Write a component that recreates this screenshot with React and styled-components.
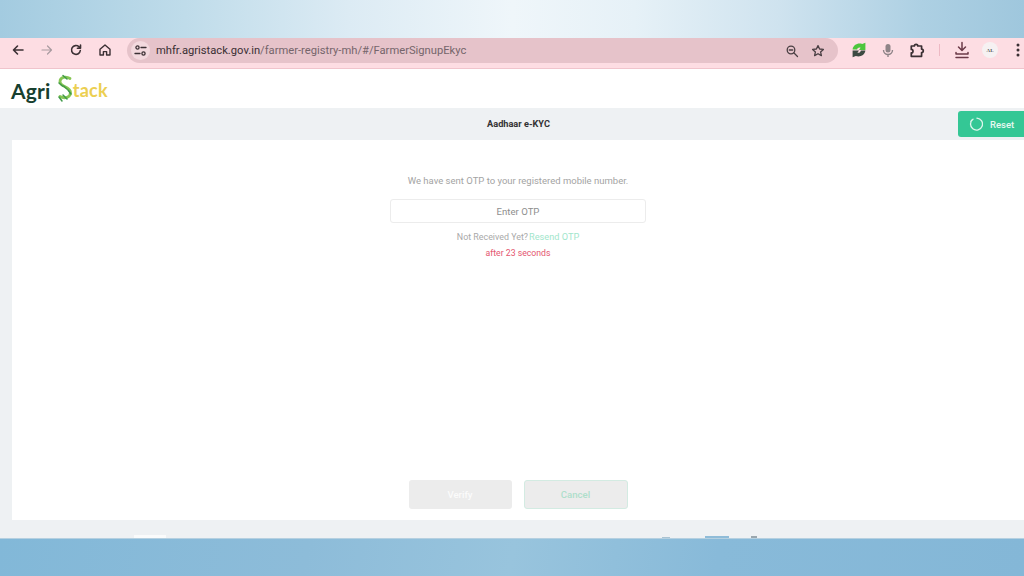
import React from "react";
import styled, { createGlobalStyle } from "styled-components";

const Global = createGlobalStyle`
  html, body { margin: 0; padding: 0; background: #eef1f3; }
  body { width: 1024px; height: 576px; overflow: hidden; font-family: Roboto, "Liberation Sans", sans-serif; }
  * { box-sizing: border-box; }
`;

const Page = styled.div`
  width: 1024px; height: 576px; display: flex; flex-direction: column; overflow: hidden;
`;
const Wallpaper = styled.div`
  height: 38px; flex: none;
  background: linear-gradient(90deg, #a3cbe0 0%, #bfdcea 18%, #dcebf4 34%, #eff6fa 50%, #e6f1f7 62%, #cfe3ef 76%, #add0e3 90%, #9fc7dd 100%);
`;
const Chrome = styled.div`
  height: 31px; flex: none; display: flex; align-items: flex-start;
  background: #fddde3; border-bottom: 1px solid #f0c4cc; padding-left: 11px;
`;
const NavButton = styled.span`
  width: 14px; height: 14px; flex: none; margin: 5px ${p => p.$gap}px 0 0;
  display: flex; color: ${p => p.$color || "#3b3034"};
`;
const Omnibox = styled.div`
  width: 711px; height: 25px; margin-left: 15px; flex: none; border-radius: 13px;
  background: #e6c3ca; display: flex; align-items: center; padding: 0 13px 0 4px; position: relative;
`;
const SiteChip = styled.span`
  width: 19px; height: 19px; border-radius: 50%; background: #f3d9de; display: flex;
  align-items: center; justify-content: center; color: #3b3034; margin-right: 6px; flex: none;
`;
const Url = styled.span`
  font: 400 11.2px Roboto, sans-serif; color: #75656b; white-space: nowrap; flex: 1;
  b { font-weight: 400; color: #3a2f33; }
`;
const OmniIcon = styled.span`
  display: flex; width: 14px; height: 14px; color: #4a3f43; margin-left: ${p => p.$gap || 0}px;
`;
const Tools = styled.div`
  display: flex; align-items: flex-start; flex: 1; position: relative; height: 100%; padding-top: 4px;
`;
const ToolIcon = styled.span`
  width: 16px; height: 16px; display: flex; align-items: center; justify-content: center;
  flex: none; margin-left: ${p => p.$gap}px; color: ${p => p.$color || "#3b3034"};
`;
const Divider = styled.span`
  width: 1px; height: 12px; margin-top: 2px; background: #eeb9c4; margin-left: 14px; flex: none;
`;
const Avatar = styled.span`
  width: 16px; height: 16px; border-radius: 50%; background: #f6f1f2; margin-left: 12px; flex: none;
  font: 700 5px "Liberation Serif", serif; color: #555; display: flex; align-items: center; justify-content: center;
`;
const LogoBar = styled.div`
  height: 39px; flex: none; background: #fff; display: flex; align-items: center; padding-left: 11px;
`;
const LogoAgri = styled.span`
  font: 700 21px/1 Lato, sans-serif; color: #17402f; letter-spacing: 0.2px; margin-top: 3px;
`;
const LogoStack = styled.span`
  font: 700 18px/1 Lato, sans-serif; color: #eccf52; letter-spacing: 0.3px; margin-left: -1px; margin-top: 3px;
`;
const LogoMark = styled.svg`
  width: 18px; height: 29px; margin-left: 5px; flex: none;
`;
const TitleBar = styled.div`
  height: 32px; flex: none; background: #eef1f3; position: relative; padding-left: 13px;
  display: flex; align-items: center; justify-content: center;
`;
const Title = styled.h1`
  margin: 0 0 1px 0; font: 700 9.2px Roboto, "Liberation Sans", sans-serif; color: #333;
`;
const ResetButton = styled.button`
  position: absolute; right: 0; top: 3px; width: 66px; height: 26px; border: 0;
  border-radius: 3px 0 0 3px; background: #34c795; color: #e6f8f1; display: flex; align-items: center;
  padding: 0 0 0 11px; gap: 7px; font: 500 9.5px Roboto, sans-serif;
`;
const Content = styled.div`
  flex: 1; margin-left: 12px; background: #fff; display: flex; flex-direction: column; align-items: center;
  padding-top: 35px;
`;
const Notice = styled.p`
  margin: 0 0 12px; font: 400 9.5px/12px Roboto, sans-serif; color: #a3a3a3;
`;
const OtpInput = styled.div`
  width: 256px; height: 24px; border: 1px solid #ececec; border-radius: 3px; margin-bottom: 8px;
  display: flex; align-items: center; justify-content: center; font: 400 9.6px Roboto, sans-serif; color: #8e8e8e;
`;
const ResendRow = styled.div`
  font: 400 8.9px/12px Roboto, sans-serif; color: #a9a9a9; margin-bottom: 4px; white-space: nowrap;
`;
const ResendLink = styled.span`
  color: #a2e6cc; margin-left: 1px; font-size: 9.2px;
`;
const Timer = styled.div`
  font: 400 8.7px/12px Roboto, sans-serif; color: #e4566f;
`;
const Actions = styled.div`
  margin-top: auto; margin-bottom: 11px; display: flex; gap: 12px;
`;
const VerifyButton = styled.button`
  width: 103px; height: 29px; border: 0; border-radius: 3px; background: #ececec; color: #fbfbfb;
  font: 500 9.6px Roboto, sans-serif; padding: 0;
`;
const CancelButton = styled(VerifyButton)`
  width: 104px; border: 1px solid #d3ebe2; color: #aedfcb;
`;
const Footer = styled.div`
  height: 18px; flex: none; background: #eef1f3; position: relative;
`;
const FooterScrap = styled.span`
  position: absolute; bottom: 0; left: ${p => p.$left}px; width: ${p => p.$width}px; height: ${p => p.$h}px;
  background: ${p => p.$color};
`;
const Desktop = styled.div`
  height: 38px; flex: none; border-top: 1px solid #b5d0e0;
  background: linear-gradient(100deg, #82b8d8 0%, #8dbcd9 30%, #98c4dd 50%, #88bad9 70%, #84b7d7 100%);
`;

const stroke = { fill: "none", stroke: "currentColor", strokeLinecap: "round", strokeLinejoin: "round" };
const Ico = ({ children, w = 1.6, size = 14 }) => (
  <svg width={size} height={size} viewBox="0 0 14 14" {...stroke} strokeWidth={w}>{children}</svg>
);

export default function App() {
  return (
    <Page>
      <Global />
      <Wallpaper />
      <Chrome>
        <NavButton $gap={15}><Ico><path d="M12 7H2.5M6.5 3 2.5 7l4 4" /></Ico></NavButton>
        <NavButton $gap={15} $color="#a99ba0"><Ico w={1.2}><path d="M2 7h9.5M7.5 3l4 4-4 4" /></Ico></NavButton>
        <NavButton $gap={15}><Ico><path d="M11.3 7.5A4.4 4.4 0 1 1 10 3.8L11.5 5.2M11.5 2v3.2H8.4" /></Ico></NavButton>
        <NavButton $gap={0}><Ico w={1.4}><path d="M2 6.3 7 2l5 4.3V12H8.6V8.6H5.4V12H2z" /></Ico></NavButton>
        <Omnibox>
          <SiteChip>
            <svg width="13" height="13" viewBox="0 0 13 13" {...stroke} strokeWidth="1.3">
              <circle cx="3.5" cy="3.5" r="1.6" /><path d="M7 3.5h5M1 9.5h5" /><circle cx="9.5" cy="9.5" r="1.6" />
            </svg>
          </SiteChip>
          <Url><b>mhfr.agristack.gov.in</b>/farmer-registry-mh/#/FarmerSignupEkyc</Url>
          <OmniIcon>
            <Ico w={1.3}><circle cx="6" cy="6" r="3.8" /><path d="M9 9l3.5 3.5M4.3 6h3.4" /></Ico>
          </OmniIcon>
          <OmniIcon $gap={12}>
            <Ico w={1.3}><path d="M7 1.6 8.6 5l3.8.4-2.8 2.5.8 3.7L7 9.7l-3.4 1.9.8-3.7L1.6 5.4 5.4 5z" /></Ico>
          </OmniIcon>
        </Omnibox>
        <Tools>
          <ToolIcon $gap={13}>
            <svg width="16" height="16" viewBox="0 0 15 15">
              <path d="M1.500 7C2 2.500 6.500 .5 10.500 1.800L13.500 .8V7.500H7.500L9 5.500C7.500 4.800 6.200 5.500 5.700 7z" fill="#4cc63c" />
              <path d="M13.500 8C13 12.500 8.500 14.500 4.500 13.200L1.500 14.200V8H7.500L6 10C7.500 10.500 8.800 9.700 9.300 8z" fill="#3d4a42" />
            </svg>
          </ToolIcon>
          <ToolIcon $gap={13} $color="#8f8488">
            <svg width="14" height="15" viewBox="0 0 14 15">
              <rect x="4.500" y="1" width="5" height="8.500" rx="2.500" fill="currentColor" />
              <path d="M2.500 7a4.500 4.500 0 0 0 9 0M7 11.500V14" fill="none" stroke="currentColor" strokeWidth="1.400" />
            </svg>
          </ToolIcon>
          <ToolIcon $gap={13}>
            <svg width="16" height="16" viewBox="0 0 14 14" {...stroke} strokeWidth="1.500">
              <path d="M2 3.500h2.700a1.500 1.500 0 0 1 3 0H11v2.700a1.500 1.500 0 0 1 0 3V12.500H2V9.500a1.500 1.500 0 0 0 0-3z" />
            </svg>
          </ToolIcon>
          <Divider />
          <ToolIcon $gap={14} $color="#6b3a48">
            <svg width="16" height="18" viewBox="0 0 16 18" {...stroke} strokeWidth="1.500">
              <path d="M8 1.500V9M4.500 6 8 9.500 11.500 6M2 11.500V13h12v-1.500M2 16.500h12" />
            </svg>
          </ToolIcon>
          <Avatar>AL</Avatar>
          <ToolIcon $gap={12}>
            <svg width="4" height="14" viewBox="0 0 4 14" fill="currentColor">
              <circle cx="2" cy="2" r="1.500" /><circle cx="2" cy="7" r="1.500" /><circle cx="2" cy="12" r="1.500" />
            </svg>
          </ToolIcon>
        </Tools>
      </Chrome>
      <LogoBar>
        <LogoAgri>Agri</LogoAgri>
        <LogoMark viewBox="0 0 18 29" fill="none" strokeLinecap="round">
          <path d="M14 4.500C10 2 4 3 4 7.500c0 5.500 10.500 5 10.500 11 0 5-6 6.500-10.500 4" stroke="#86c653" strokeWidth="2.800" />
          <path d="M7 1.500 11 5M3 9l3.500 3M7.500 12l3.500 3M12 16l3 4M7 21l4 4M3 23l3 4" stroke="#3f9a4a" strokeWidth="1.500" />
        </LogoMark>
        <LogoStack>tack</LogoStack>
      </LogoBar>
      <TitleBar>
        <Title>Aadhaar e-KYC</Title>
        <ResetButton>
          <svg width="14" height="14" viewBox="0 0 14 14" fill="none" stroke="#dff6ed" strokeWidth="1.300" strokeLinecap="round">
            <path d="M4 2.200A6 6 0 1 0 8 1.100M1.800 4.500 3 3" />
          </svg>
          Reset
        </ResetButton>
      </TitleBar>
      <Content>
        <Notice>We have sent OTP to your registered mobile number.</Notice>
        <OtpInput>Enter OTP</OtpInput>
        <ResendRow>Not Received Yet?<ResendLink>Resend OTP</ResendLink></ResendRow>
        <Timer>after 23 seconds</Timer>
        <Actions>
          <VerifyButton>Verify</VerifyButton>
          <CancelButton>Cancel</CancelButton>
        </Actions>
      </Content>
      <Footer>
        <FooterScrap $left={134} $width={32} $h={3} $color="#fafbfb" />
        <FooterScrap $left={662} $width={8} $h={1} $color="#a9c3d2" />
        <FooterScrap $left={705} $width={24} $h={2} $color="#8fbcd8" />
        <FooterScrap $left={751} $width={6} $h={2} $color="#9aa7ae" />
      </Footer>
      <Desktop />
    </Page>
  );
}
